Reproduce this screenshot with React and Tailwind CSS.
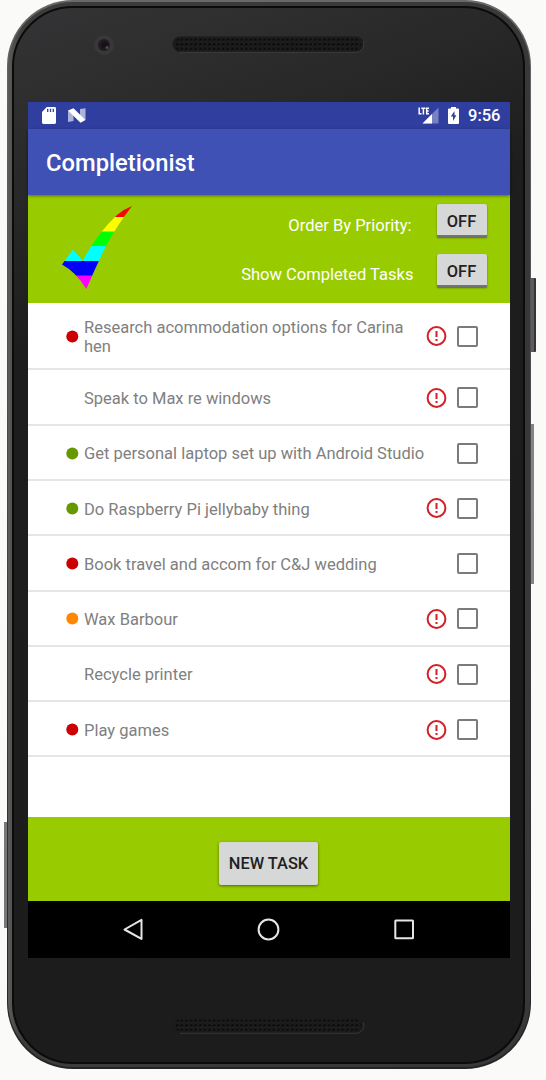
const RED = "#cc0000";
const GREEN = "#669900";
const ORANGE = "#ff8800";

const tasks = [
  { title: "Research acommodation options for Carina hen", color: RED, urgent: true },
  { title: "Speak to Max re windows", color: null, urgent: true },
  { title: "Get personal laptop set up with Android Studio", color: GREEN, urgent: false },
  { title: "Do Raspberry Pi jellybaby thing", color: GREEN, urgent: true },
  { title: "Book travel and accom for C&J wedding", color: RED, urgent: false },
  { title: "Wax Barbour", color: ORANGE, urgent: true },
  { title: "Recycle printer", color: null, urgent: true },
  { title: "Play games", color: RED, urgent: true },
];

function Speaker({ id }) {
  return (
    <svg width="193" height="17" viewBox="0 0 193 17" className="block">
      <defs>
        <pattern id={id} width="4.6" height="4.6" patternUnits="userSpaceOnUse" x="3" y="1.6">
          <rect width="4.6" height="4.6" fill="#1b1b1b" />
          <circle cx="2.3" cy="2.3" r="1.15" fill="#050505" />
          <circle cx="2.7" cy="3.4" r="0.5" fill="#333333" />
        </pattern>
      </defs>
      <rect x="0.5" y="0.5" width="191.5" height="15.5" rx="7.7" fill="#1b1b1b" />
      <path d="M8 16.2h176a7.8 7.8 0 0 0 7.2-11" fill="none" stroke="#484848" strokeWidth="0.7" />
      <rect x="3" y="1.6" width="186" height="13.8" rx="6.5" fill={`url(#${id})`} />
    </svg>
  );
}

function StatusBar() {
  return (
    <div className="flex h-[27px] shrink-0 items-center bg-[#303f9f] pl-[14px] pr-[9px] text-white">
      <svg width="14" height="17" viewBox="0 0 14 17">
        <path d="M4.8 0H12.6Q14 0 14 1.4V15.6Q14 17 12.6 17H1.4Q0 17 0 15.6V4.9Z" fill="#fff" />
        <path d="M5.7 1.7v3.3M8.5 1.7v3.3M11.3 1.7v3.3" stroke="#303f9f" strokeWidth="1.3" />
      </svg>
      <svg width="18" height="15" viewBox="0 0 18 15" className="ml-3">
        <path d="M0 2.5L5.5 6V13L0 14ZM12 1L17.5 .2V12L12 9Z" fill="#fff" opacity=".6" />
        <path d="M0 2.5L5.5 .3L17.5 12L12.5 14.7Z" fill="#fff" />
      </svg>
      <div className="ml-auto flex items-center">
        <svg width="21" height="17" viewBox="0 0 21 17">
          <path d="M20.5 .5V16.5H4.5Z" fill="#fff" opacity=".35" />
          <path d="M0 0H12V9H0Z" fill="#303f9f" />
          <path d="M4.5 16.5L14 7V16.5Z" fill="#fff" />
          <path d="M1.2 .5V6.7H3.5M3.3 1.2H7.5M5.4 1.2V7.4M11 1.2H8.7V6.7H11M8.7 4H10.7" fill="none" stroke="#fff" strokeWidth="1.5" />
        </svg>
        <svg width="11" height="17" viewBox="0 0 11 17" className="ml-[9px]">
          <path d="M3 0H8V1.5H10Q11 1.5 11 2.5V16Q11 17 10 17H1Q0 17 0 16V2.5Q0 1.5 1 1.5H3Z" fill="#fff" />
          <path d="M6.5 4L2.8 9.5H5V14L8.4 8.3H6.5Z" fill="#303f9f" />
        </svg>
        <span className="ml-[9px] pt-[2px] text-[16.5px] leading-none font-medium">9:56</span>
      </div>
    </div>
  );
}

function Logo() {
  return (
    <svg width="71" height="84" viewBox="0 0 71 84" className="mt-[10px] ml-[34px] shrink-0 self-start">
      <defs>
        <clipPath id="tick">
          <path d="M0 59.5Q5 53 10.5 45Q16 49 20.500 56Q34 30 55 10Q62 4 70 1Q56 19 45 39Q35 59 24.300 84Q14 67 0 59.500Z" />
        </clipPath>
      </defs>
      <g clipPath="url(#tick)">
        <rect width="72" height="12" fill="#f00" />
        <rect y="12" width="72" height="15" fill="#ff0" />
        <rect y="26.5" width="72" height="15" fill="#0f0" />
        <rect y="41" width="72" height="15" fill="#0ff" />
        <rect y="56" width="72" height="15" fill="#00f" />
        <rect y="70.5" width="72" height="14" fill="#f0f" />
      </g>
    </svg>
  );
}

function Toggle() {
  return (
    <button className="h-[33px] w-[50px] rounded-t-[2px] border-b-2 border-[#737573] bg-[#d6d7d7] pt-[2px] text-[16.4px] leading-[31px] font-medium text-[#212121] shadow-[0_1px_2px_rgba(0,0,0,.45)]">
      OFF
    </button>
  );
}

function Task({ task }) {
  return (
    <li className="flex min-h-[55.3px] items-center border-b-2 border-[#e5e5e5] pt-[1.5px] pr-8 pl-[38px] first:min-h-[67.4px]">
      <svg width="13" height="13" viewBox="0 0 13 13" className="shrink-0">
        {task.color && <circle cx="6.3" cy="6.5" r="6" fill={task.color} />}
      </svg>
      <span
        className={`ml-[5.5px] w-[341.5px] pt-[1.5px] text-[16.5px] leading-[19.2px] text-[#808080] ${
          task.urgent ? "pr-3" : "whitespace-nowrap"
        }`}
      >
        {task.title}
      </span>
      <svg width="22" height="22" viewBox="0 0 22 22" className="shrink-0">
        {task.urgent && (
          <>
            <circle cx="10.5" cy="11" r="8.9" fill="none" stroke="#d32027" strokeWidth="2" />
            <path d="M10.5 6V12M10.5 14V16" stroke="#d32027" strokeWidth="2" />
          </>
        )}
      </svg>
      <span className="ml-auto size-[21px] shrink-0 rounded-[2px] border-2 border-[#7b7b7b]" />
    </li>
  );
}

function NavBar() {
  return (
    <div className="flex h-[57px] shrink-0 items-center bg-black pb-[2px] pl-[93px]">
      <svg width="24" height="24" viewBox="0 0 24 24" fill="none" stroke="#e6e6e6" strokeWidth="2" strokeLinejoin="round">
        <path d="M20.5 2.9V21.9L3.500 12.500Z" />
      </svg>
      <svg width="24" height="24" viewBox="0 0 24 24" fill="none" stroke="#e6e6e6" strokeWidth="2" className="ml-[112px]">
        <circle cx="11.5" cy="12.5" r="9.9" />
      </svg>
      <svg width="24" height="24" viewBox="0 0 24 24" fill="none" stroke="#e6e6e6" strokeWidth="2" className="ml-[111px]">
        <rect x="3.3" y="3.5" width="17.7" height="17.7" rx=".5" />
      </svg>
    </div>
  );
}

function Screen() {
  return (
    <main className="flex h-[856px] w-[482px] flex-col bg-white">
      <StatusBar />
      <header className="relative flex h-[66px] shrink-0 items-center bg-[#3f51b5] pt-[3px] pl-[18.5px] shadow-[0_1px_3px_rgba(0,0,0,.45)]">
        <h1 className="text-[23.75px] leading-none font-medium text-white">Completionist</h1>
      </header>
      <section className="flex h-[108px] shrink-0 bg-[#99cc00]">
        <Logo />
        <div className="ml-auto flex flex-col gap-[17px] pt-[9px] pr-[23px] text-[16.55px] text-white">
          <div className="flex h-[33px] items-center justify-end">
            <span className="mr-[25px] pt-[11px] leading-6">Order By Priority:</span>
            <Toggle />
          </div>
          <div className="flex h-[33px] items-center justify-end">
            <span className="mr-[23px] pt-[9px] leading-6">Show Completed Tasks</span>
            <Toggle />
          </div>
        </div>
      </section>
      <ul className="min-h-0 flex-1">
        {tasks.map((task) => (
          <Task key={task.title} task={task} />
        ))}
      </ul>
      <footer className="flex h-[84px] shrink-0 items-start justify-center bg-[#99cc00] pt-[25px]">
        <button className="h-[43px] w-[99px] rounded-[2px] bg-[#d6d7d7] pt-[2px] text-[16.4px] font-medium whitespace-nowrap text-[#212121] shadow-[0_1px_3px_rgba(0,0,0,.5)]">
          NEW TASK
        </button>
      </footer>
      <NavBar />
    </main>
  );
}

export default function App() {
  return (
    <div className="h-[1080px] w-[546px] overflow-hidden bg-[#fafaf8] pl-[7px] font-['Roboto',sans-serif]">
      <div className="relative h-[1069px] w-[524px]">
        <span className="absolute top-[278px] left-[522px] h-[74px] w-[7px] rounded-r-[1px] border-r-2 border-[#353335] bg-[#5c5a5d]" />
        <span className="absolute top-[424px] left-[520px] h-[160px] w-[7px] bg-[#858384]" />
        <span className="absolute top-[822px] left-[-3px] h-[106px] w-[8px] bg-[#777777]" />
        <div className="relative h-[1069px] w-[524px] rounded-[66px] bg-linear-to-b from-[#686868] via-[#444243] to-[#242424] p-[1px] pt-[2px]">
          <div className="h-[1065px] w-[522px] rounded-[65px] bg-linear-to-r from-[#5b5b5b] via-[#3c3c3c] via-[3%] to-[#393739] px-[4px] pt-[4px]">
            <div className="flex h-[1058px] w-[513px] flex-col items-center rounded-[61px] border-2 border-[#0b0b0b] bg-[linear-gradient(160deg,#343436_0%,#2b2b2b_12%,#1d1d1d_28%,#1c1c1c_100%)]">
              <div className="flex h-[94px] w-full shrink-0 items-start pt-[26px] pl-[79px]">
                <svg width="22" height="22" viewBox="0 0 22 22">
                  <circle cx="11" cy="11" r="10" fill="#383838" />
                  <circle cx="11" cy="11" r="6" fill="#201d22" />
                  <circle cx="11.5" cy="11" r="3.5" fill="#15121a" />
                  <circle cx="14" cy="13.5" r="1.5" fill="#5b4548" />
                </svg>
                <div className="mt-[2px] ml-[57px]">
                  <Speaker id="earpiece" />
                </div>
              </div>
              <Screen />
              <div className="mt-[59px]">
                <Speaker id="loudspeaker" />
              </div>
            </div>
          </div>
        </div>
      </div>
    </div>
  );
}
